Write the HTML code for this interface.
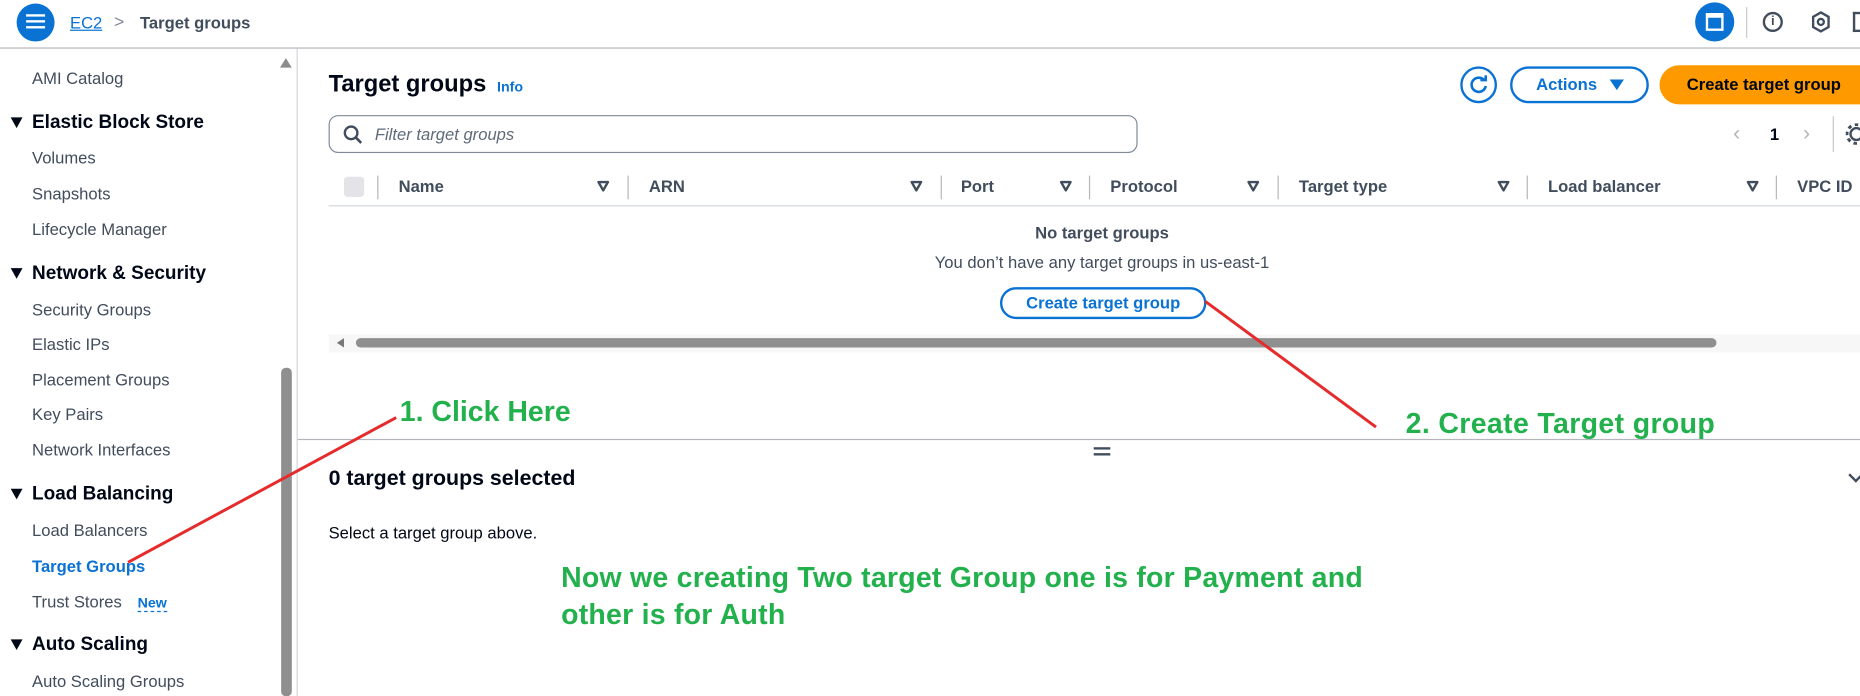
<!DOCTYPE html>
<html><head><meta charset="utf-8"><style>
*{margin:0;padding:0;box-sizing:border-box}
html,body{width:1860px;height:696px;overflow:hidden;background:#fff}
#w{position:absolute;left:0;top:0;width:1568px;height:587px;transform:scale(1.18622);transform-origin:0 0;font-family:"Liberation Sans",sans-serif;color:#000716;}
.a{position:absolute;white-space:nowrap;line-height:1}
.s{font-size:14px;color:#414d5c;left:27px}
.h{font-size:16px;font-weight:bold;left:27px;color:#000716}
.tri{position:absolute;left:9px;width:0;height:0;border-left:5px solid transparent;border-right:5px solid transparent;border-top:9px solid #000716}
.th{font-size:14px;font-weight:bold;color:#414d5c;top:150px}
.dv{position:absolute;top:148px;width:1px;height:20px;background:#b4b4bb}
.so{position:absolute;top:152px;width:11px;height:10px}
.g{color:#22b14c;font-weight:bold;font-size:24px}
</style></head><body><div id="w">
<!-- header -->
<div class="a" style="left:14px;top:3px;width:32px;height:32px;border-radius:50%;background:#0972d3"></div>
<div class="a" style="left:22px;top:12px;width:16px;height:2px;background:#fff;box-shadow:0 5px 0 #fff,0 10px 0 #fff"></div>
<div class="a" style="left:59px;top:12px;font-size:14px;color:#0972d3;text-decoration:underline">EC2</div>
<div class="a" style="left:96px;top:11px;font-size:15px;color:#7d8998">&gt;</div>
<div class="a" style="left:118px;top:12px;font-size:14px;font-weight:bold;color:#414d5c">Target groups</div>
<div class="a" style="left:1429px;top:2px;width:33px;height:33px;border-radius:50%;background:#0972d3"></div>
<div class="a" style="left:1438px;top:11px;width:15px;height:15px;border:2px solid #fff;border-top-width:4px"></div>
<div class="a" style="left:1472px;top:6px;width:1px;height:26px;background:#c6c6cd"></div>
<div class="a" style="left:1486px;top:10px;width:17px;height:17px;border:2px solid #414d5c;border-radius:50%;font-size:11px;font-weight:bold;text-align:center;line-height:13px;color:#414d5c">i</div>
<svg class="a" style="left:1526px;top:9px" width="18" height="19" viewBox="0 0 18 19"><path d="M9 1.5 L15.5 5.2 V13.8 L9 17.5 L2.5 13.8 V5.2Z" fill="none" stroke="#414d5c" stroke-width="2"/><circle cx="9" cy="9.5" r="2.5" fill="none" stroke="#414d5c" stroke-width="2"/></svg>
<div class="a" style="left:1562px;top:10px;width:6px;height:17px;border:2px solid #414d5c;border-right:none"></div>
<div class="a" style="left:0;top:40px;width:1568px;height:1px;background:#b4b4bb"></div>
<!-- sidebar -->
<div class="a" style="left:250px;top:41px;width:1px;height:546px;background:#d1d5db"></div>
<div class="a" style="left:236px;top:49px;width:0;height:0;border-left:5px solid transparent;border-right:5px solid transparent;border-bottom:8px solid #8c8c8c"></div>
<div class="a" style="left:237px;top:310px;width:9px;height:277px;background:#8f8f8f;border-radius:4px"></div>
<div class="a s" style="top:59px">AMI Catalog</div>
<div class="tri" style="top:99px"></div><div class="a h" style="top:96px">Elastic Block Store</div>
<div class="a s" style="top:126px">Volumes</div>
<div class="a s" style="top:156px">Snapshots</div>
<div class="a s" style="top:186px">Lifecycle Manager</div>
<div class="tri" style="top:226px"></div><div class="a h" style="top:223px">Network &amp; Security</div>
<div class="a s" style="top:254px">Security Groups</div>
<div class="a s" style="top:283px">Elastic IPs</div>
<div class="a s" style="top:313px">Placement Groups</div>
<div class="a s" style="top:342px">Key Pairs</div>
<div class="a s" style="top:372px">Network Interfaces</div>
<div class="tri" style="top:412px"></div><div class="a h" style="top:409px">Load Balancing</div>
<div class="a s" style="top:440px">Load Balancers</div>
<div class="a s" style="top:470px;color:#0972d3;font-weight:bold">Target Groups</div>
<div class="a s" style="top:500px">Trust Stores</div>
<div class="a" style="left:116px;top:502px;font-size:12px;font-weight:bold;color:#0972d3;border-bottom:1px dashed #0972d3;padding-bottom:1px">New</div>
<div class="tri" style="top:539px"></div><div class="a h" style="top:536px">Auto Scaling</div>
<div class="a s" style="top:567px">Auto Scaling Groups</div>
<!-- main -->
<div class="a" style="left:277px;top:61px;font-size:20px;font-weight:bold">Target groups</div>
<div class="a" style="left:419px;top:67px;font-size:12px;font-weight:bold;color:#0972d3">Info</div>
<div class="a" style="left:1231px;top:56px;width:31px;height:31px;border:2px solid #0972d3;border-radius:50%"></div>
<svg class="a" style="left:1237px;top:62px" width="19" height="19" viewBox="0 0 19 19"><path d="M14.5 6 A6 6 0 1 0 15.5 10.5" fill="none" stroke="#0972d3" stroke-width="2.2"/><path d="M11 5.5 L15.5 5.5 L15.5 1.5" fill="none" stroke="#0972d3" stroke-width="2.2"/></svg>
<div class="a" style="left:1273px;top:56px;width:117px;height:31px;border:2px solid #0972d3;border-radius:16px"></div>
<div class="a" style="left:1295px;top:64px;font-size:14px;font-weight:bold;color:#0972d3">Actions</div>
<div class="a" style="left:1357px;top:67px;width:0;height:0;border-left:6px solid transparent;border-right:6px solid transparent;border-top:9px solid #0972d3"></div>
<div class="a" style="left:1399px;top:55px;width:190px;height:33px;border-radius:17px;background:#ff9900"></div>
<div class="a" style="left:1422px;top:64px;font-size:14px;font-weight:bold;color:#000716">Create target group</div>
<div class="a" style="left:277px;top:97px;width:682px;height:32px;border:1.5px solid #7d8998;border-radius:8px"></div>
<svg class="a" style="left:289px;top:105px" width="17" height="17" viewBox="0 0 17 17"><circle cx="7" cy="7" r="5.3" fill="none" stroke="#414d5c" stroke-width="2"/><path d="M11 11 L15.5 15.5" stroke="#414d5c" stroke-width="2.2"/></svg>
<div class="a" style="left:316px;top:106px;font-size:14px;font-style:italic;color:#5f6b7a">Filter target groups</div>
<div class="a" style="left:1461px;top:103px;font-size:18px;color:#b4b4bb">&lsaquo;</div>
<div class="a" style="left:1492px;top:106px;font-size:14px;font-weight:bold">1</div>
<div class="a" style="left:1520px;top:103px;font-size:18px;color:#b4b4bb">&rsaquo;</div>
<div class="a" style="left:1545px;top:98px;width:1px;height:30px;background:#c6c6cd"></div>
<svg class="a" style="left:1556px;top:104px" width="12" height="18" viewBox="0 0 12 18"><circle cx="9" cy="9" r="5" fill="none" stroke="#414d5c" stroke-width="2"/><circle cx="9" cy="9" r="8" fill="none" stroke="#414d5c" stroke-width="2.5" stroke-dasharray="3 3"/></svg>
<!-- table header -->
<div class="a" style="left:290px;top:149px;width:17px;height:17px;background:#e3e3e8;border-radius:3px"></div>
<div class="dv" style="left:318px"></div><div class="dv" style="left:529px"></div><div class="dv" style="left:793px"></div><div class="dv" style="left:918px"></div><div class="dv" style="left:1077px"></div><div class="dv" style="left:1287px"></div><div class="dv" style="left:1497px"></div>
<div class="a th" style="left:336px">Name</div><div class="a th" style="left:547px">ARN</div><div class="a th" style="left:810px">Port</div><div class="a th" style="left:936px">Protocol</div><div class="a th" style="left:1095px">Target type</div><div class="a th" style="left:1305px">Load balancer</div><div class="a th" style="left:1515px">VPC ID</div>
<svg class="so" style="left:503px" viewBox="0 0 11 10"><path d="M1.5 1.5H9.5L5.5 8.5Z" fill="none" stroke="#414d5c" stroke-width="2" stroke-linejoin="round"/></svg>
<svg class="so" style="left:767px" viewBox="0 0 11 10"><path d="M1.5 1.5H9.5L5.5 8.5Z" fill="none" stroke="#414d5c" stroke-width="2" stroke-linejoin="round"/></svg>
<svg class="so" style="left:893px" viewBox="0 0 11 10"><path d="M1.5 1.5H9.5L5.5 8.5Z" fill="none" stroke="#414d5c" stroke-width="2" stroke-linejoin="round"/></svg>
<svg class="so" style="left:1051px" viewBox="0 0 11 10"><path d="M1.5 1.5H9.5L5.5 8.5Z" fill="none" stroke="#414d5c" stroke-width="2" stroke-linejoin="round"/></svg>
<svg class="so" style="left:1262px" viewBox="0 0 11 10"><path d="M1.5 1.5H9.5L5.5 8.5Z" fill="none" stroke="#414d5c" stroke-width="2" stroke-linejoin="round"/></svg>
<svg class="so" style="left:1472px" viewBox="0 0 11 10"><path d="M1.5 1.5H9.5L5.5 8.5Z" fill="none" stroke="#414d5c" stroke-width="2" stroke-linejoin="round"/></svg>
<div class="a" style="left:277px;top:173px;width:1291px;height:1px;background:#d1d5db"></div>
<div class="a" style="left:729px;top:189px;width:400px;text-align:center;font-size:14px;font-weight:bold;color:#414d5c">No target groups</div>
<div class="a" style="left:679px;top:214px;width:500px;text-align:center;font-size:14px;color:#414d5c">You don’t have any target groups in us-east-1</div>
<div class="a" style="left:843px;top:242px;width:174px;height:27px;border:2px solid #0972d3;border-radius:14px"></div>
<div class="a" style="left:843px;top:248px;width:174px;text-align:center;font-size:14px;font-weight:bold;color:#0972d3">Create target group</div>
<div class="a" style="left:277px;top:282px;width:1291px;height:15px;background:#f7f7f7"></div>
<div class="a" style="left:284px;top:285px;width:0;height:0;border-top:4px solid transparent;border-bottom:4px solid transparent;border-right:6px solid #777"></div>
<div class="a" style="left:300px;top:285px;width:1147px;height:8px;background:#8f8f8f;border-radius:4px"></div>
<div class="a" style="left:251px;top:370px;width:1317px;height:1px;background:#b4b4bb"></div>
<div class="a" style="left:922px;top:377px;width:14px;height:2px;background:#414d5c;box-shadow:0 5px 0 #414d5c"></div>
<div class="a" style="left:277px;top:394px;font-size:18px;font-weight:bold">0 target groups selected</div>
<div class="a" style="left:1560px;top:396px;width:9px;height:9px;border-right:2px solid #414d5c;border-bottom:2px solid #414d5c;transform:rotate(45deg)"></div>
<div class="a" style="left:277px;top:442px;font-size:14px;color:#000716">Select a target group above.</div>
<!-- annotations -->
<svg class="a" style="left:0;top:0" width="1568" height="587"><line x1="334" y1="352" x2="108" y2="474" stroke="#e52b2b" stroke-width="2.5"/><line x1="1016" y1="254" x2="1160" y2="360" stroke="#e52b2b" stroke-width="2.5"/></svg>
<div class="a g" style="left:337px;top:336px">1. Click Here</div>
<div class="a g" style="left:1185px;top:346px;letter-spacing:0.3px">2. Create Target group</div>
<div class="a g" style="left:473px;top:476px;letter-spacing:0.2px">Now we creating Two target Group one is for Payment and</div>
<div class="a g" style="left:473px;top:507px;letter-spacing:0.2px">other is for Auth</div>
</div></body></html>
